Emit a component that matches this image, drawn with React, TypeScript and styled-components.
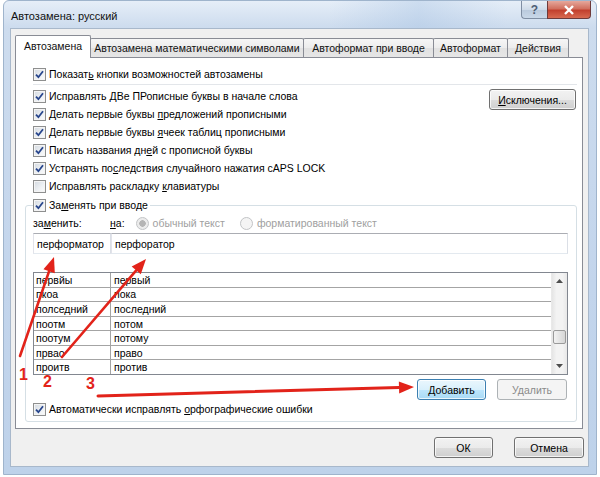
import styled, { createGlobalStyle } from "styled-components";

const GlobalStyle = createGlobalStyle`
  html, body {
    margin: 0;
    padding: 0;
    background: #fff;
  }
  body {
    font-family: "Liberation Sans", Arial, sans-serif;
    font-size: 10.5px;
    color: #000;
  }
  * {
    box-sizing: border-box;
  }
`;

const topOptions = [
  { label: <>Исправлять <u>Д</u>Ве ПРописные буквы в начале слова</>, checked: true },
  { label: <>Делать первые буквы <u>п</u>редложений прописными</>, checked: true },
  { label: <>Делать первые буквы <u>я</u>чеек таблиц прописными</>, checked: true },
  { label: <>Писать названия дн<u>е</u>й с прописной буквы</>, checked: true },
  { label: <>Устранять по<u>с</u>ледствия случайного нажатия cAPS LOCK</>, checked: true },
  { label: <>Исправлять раскладку <u>к</u>лавиатуры</>, checked: false },
];

const entries = [
  ["первйы", "первый"],
  ["пкоа", "пока"],
  ["полседний", "последний"],
  ["поотм", "потом"],
  ["поотум", "потому"],
  ["првао", "право"],
  ["проитв", "против"],
];

const tabs = [
  { title: "Автозамена", width: 76, active: true },
  { title: "Автозамена математическими символами", width: 214 },
  { title: "Автоформат при вводе", width: 131 },
  { title: "Автоформат", width: 75 },
  { title: "Действия", width: 62 },
];

const CheckBox = ({ checked }: { checked: boolean }) => (
  <Box>
    {checked && (
      <svg width="11" height="11" viewBox="0 0 11 11">
        <path d="M2 5.6 L4.4 8.2 L9 2.2" fill="none" stroke="#27458c" strokeWidth="1.8" />
      </svg>
    )}
  </Box>
);

const Arrow = ({ x1, y1, x2, y2, w = 2.6 }: { x1: number; y1: number; x2: number; y2: number; w?: number }) => {
  const dx = x2 - x1;
  const dy = y2 - y1;
  const len = Math.hypot(dx, dy);
  const ux = dx / len;
  const uy = dy / len;
  const bx = x2 - ux * 15;
  const by = y2 - uy * 15;
  const head = `${x2},${y2} ${bx - uy * 6},${by + ux * 6} ${bx + uy * 6},${by - ux * 6}`;
  return (
    <g>
      <line x1={x1} y1={y1} x2={bx} y2={by} stroke="#e2231a" strokeWidth={w} strokeLinecap="round" />
      <polygon points={head} fill="#e2231a" />
    </g>
  );
};

export default function App() {
  return (
    <Page>
      <GlobalStyle />
      <Window>
        <TitleBar>
          <Title>Автозамена: русский</Title>
          <Caption>
            <HelpButton>?</HelpButton>
            <CloseButton>
              <svg width="12" height="10" viewBox="0 0 12 10">
                <path d="M2 1 L10 9 M10 1 L2 9" stroke="#fff" strokeWidth="2.4" />
              </svg>
            </CloseButton>
          </Caption>
        </TitleBar>
        <Client>
          <TabStrip>
            {tabs.map((t) => (
              <Tab key={t.title} $width={t.width} $active={!!t.active}>
                {t.title}
              </Tab>
            ))}
          </TabStrip>
          <Panel>
            <CheckRow>
              <CheckBox checked />
              <span>
                Показат<u>ь</u> кнопки возможностей автозамены
              </span>
            </CheckRow>
            <Separator />
            <OptionsBlock>
              <div>
                {topOptions.map((o, i) => (
                  <CheckRow key={i}>
                    <CheckBox checked={o.checked} />
                    <span>{o.label}</span>
                  </CheckRow>
                ))}
              </div>
              <Button $width={87}>
                <u>И</u>сключения...
              </Button>
            </OptionsBlock>
            <Group>
              <Legend>
                <CheckBox checked />
                <span>
                  За<u>м</u>енять при вводе
                </span>
              </Legend>
              <LabelsRow>
                <FieldLabel>
                  за<u>м</u>енить:
                </FieldLabel>
                <span>
                  <u>н</u>а:
                </span>
                <RadioOption>
                  <Radio $selected />
                  обычный текст
                </RadioOption>
                <RadioOption>
                  <Radio />
                  форматированный текст
                </RadioOption>
              </LabelsRow>
              <InputsRow>
                <TextField $width={78}>перформатор</TextField>
                <TextField>перфоратор</TextField>
              </InputsRow>
              <ListBox>
                <Rows>
                  {entries.map(([from, to]) => (
                    <Row key={from}>
                      <Cell $first>{from}</Cell>
                      <Cell>{to}</Cell>
                    </Row>
                  ))}
                </Rows>
                <ScrollBar>
                  <ScrollArrow>
                    <svg width="7" height="4" viewBox="0 0 7 4">
                      <path d="M0 4 L3.5 0 L7 4 Z" fill="#4d4d4d" />
                    </svg>
                  </ScrollArrow>
                  <Track>
                    <Thumb />
                  </Track>
                  <ScrollArrow>
                    <svg width="7" height="4" viewBox="0 0 7 4">
                      <path d="M0 0 L3.5 4 L7 0 Z" fill="#4d4d4d" />
                    </svg>
                  </ScrollArrow>
                </ScrollBar>
              </ListBox>
              <ButtonsRow>
                <Button $width={69} $default>
                  <u>Д</u>обавить
                </Button>
                <Button $width={70} $disabled>
                  Удалить
                </Button>
              </ButtonsRow>
              <CheckRow>
                <CheckBox checked />
                <span>
                  Автоматически исправлять <u>о</u>рфографические ошибки
                </span>
              </CheckRow>
            </Group>
          </Panel>
          <Footer>
            <Button $width={59}>ОК</Button>
            <Button $width={70}>Отмена</Button>
          </Footer>
        </Client>
      </Window>
      <Annotations width="600" height="477" viewBox="0 0 600 477">
        <Arrow x1={20} y1={356} x2={54} y2={257} />
        <Arrow x1={62} y1={357} x2={146} y2={259} />
        <Arrow x1={98} y1={396} x2={414} y2={387} w={3} />
        <NumberText x="19" y="380">1</NumberText>
        <NumberText x="43" y="387">2</NumberText>
        <NumberText x="86" y="389">3</NumberText>
      </Annotations>
    </Page>
  );
}

const Page = styled.div`
  position: relative;
  width: 600px;
  height: 477px;
  overflow: hidden;
  background: #fff;
`;

const Window = styled.div`
  margin-left: 3px;
  width: 594px;
  height: 475px;
  display: flex;
  flex-direction: column;
  border: 1px solid #9fb4cc;
  border-radius: 6px 6px 0 0;
  background: linear-gradient(180deg, #e6eef8 0px, #cddcee 26px, #c3d5ec 60%, #bed2ea 100%);
`;

const TitleBar = styled.div`
  height: 27px;
  display: flex;
  align-items: flex-start;
  padding-left: 7px;
  background: linear-gradient(90deg, rgba(255, 255, 255, 0) 0%, rgba(255, 255, 255, 0) 55%, rgba(160, 190, 225, 0.35) 70%, rgba(255, 255, 255, 0) 85%);
`;

const Title = styled.div`
  margin-top: 9px;
  font-size: 11px;
  color: #111;
`;

const Caption = styled.div`
  margin-left: auto;
  margin-right: 5px;
  display: flex;
`;

const HelpButton = styled.div`
  width: 26px;
  height: 18px;
  display: flex;
  align-items: center;
  justify-content: center;
  border: 1px solid #7f8ea3;
  border-right: none;
  border-top: none;
  border-radius: 0 0 0 4px;
  background: linear-gradient(180deg, #e9eff6 0%, #cfdbe9 50%, #b9c9dc 51%, #c9d8e9 100%);
  font-size: 12px;
  font-weight: bold;
  color: #4f5f75;
`;

const CloseButton = styled.div`
  width: 44px;
  height: 18px;
  display: flex;
  align-items: center;
  justify-content: center;
  border: 1px solid #6e3a3a;
  border-top: none;
  border-radius: 0 0 4px 0;
  background: linear-gradient(180deg, #e6a89c 0%, #d1705f 45%, #c2402e 55%, #d86a50 100%);
`;

const Client = styled.div`
  flex: 1;
  margin: 0 7px 7px 6px;
  border: 1px solid #a8b8cb;
  background: #f0f0f0;
  padding: 6px 5px 0 4px;
  display: flex;
  flex-direction: column;
`;

const TabStrip = styled.div`
  height: 22px;
  display: flex;
  align-items: flex-end;
  position: relative;
  z-index: 1;
`;

const Tab = styled.div<{ $width: number; $active: boolean }>`
  width: ${({ $width }) => $width}px;
  height: ${({ $active }) => ($active ? 23 : 19)}px;
  margin-bottom: ${({ $active }) => ($active ? -1 : 0)}px;
  margin-left: -1px;
  &:first-child {
    margin-left: 0;
  }
  display: flex;
  align-items: center;
  justify-content: center;
  padding-bottom: ${({ $active }) => ($active ? 2 : 0)}px;
  border: 1px solid #898c95;
  border-bottom: none;
  border-radius: 2px 2px 0 0;
  background: ${({ $active }) =>
    $active ? "#fff" : "linear-gradient(180deg, #f6f6f6 0%, #ececec 50%, #e1e1e1 51%, #e6e6e6 100%)"};
  position: relative;
  z-index: ${({ $active }) => ($active ? 2 : 1)};
  white-space: nowrap;
  color: #111;
`;

const Panel = styled.div`
  flex: 1;
  border: 1px solid #898c95;
  background: #fff;
  padding: 7px 5px 0 17px;
  display: flex;
  flex-direction: column;
`;

const CheckRow = styled.div`
  height: 18px;
  display: flex;
  align-items: center;
  gap: 3px;
  white-space: nowrap;
`;

const Box = styled.span`
  width: 13px;
  height: 13px;
  flex: none;
  display: flex;
  align-items: center;
  justify-content: center;
  border: 1px solid #8e8f8f;
  background: linear-gradient(135deg, #d3d9e0 0%, #eef1f4 60%, #fbfbfb 100%);
  box-shadow: inset 0 0 0 1px #f4f4f4;
`;

const Separator = styled.div`
  height: 1px;
  margin: 1px 0 2px;
  background: #e3e6ea;
`;

const OptionsBlock = styled.div`
  display: flex;
  align-items: flex-start;
  justify-content: space-between;

  & > button {
    margin-top: 2px;
    margin-right: 1px;
  }
`;

const Button = styled.button<{ $width: number; $default?: boolean; $disabled?: boolean }>`
  width: ${({ $width }) => $width}px;
  height: 21px;
  padding: 0;
  font-family: inherit;
  font-size: 10.5px;
  color: ${({ $disabled }) => ($disabled ? "#8a8a8a" : "#000")};
  border: 1px solid ${({ $default, $disabled }) => ($default ? "#3c7fb1" : $disabled ? "#adb2b5" : "#707070")};
  border-radius: 3px;
  background: ${({ $default, $disabled }) =>
    $default
      ? "linear-gradient(180deg, #eaf6fd 0%, #d9f0fc 50%, #bee6fd 51%, #a7d9f5 100%)"
      : $disabled
      ? "#f4f4f4"
      : "linear-gradient(180deg, #f2f2f2 0%, #ebebeb 50%, #dddddd 51%, #cfcfcf 100%)"};
  box-shadow: inset 0 0 0 1px ${({ $disabled }) => ($disabled ? "#f4f4f4" : "rgba(255,255,255,0.75)")};
`;

const Group = styled.fieldset`
  margin: 1px 0 0 -8px;
  padding: 0 8px 3px 7px;
  min-width: 0;
  border: 1px solid #d5dfe5;
  border-radius: 3px;
`;

const Legend = styled.legend`
  padding: 0 2px 0 0;
  height: 18px;
  display: flex;
  align-items: center;
  gap: 3px;
  white-space: nowrap;
`;

const LabelsRow = styled.div`
  height: 18px;
  display: flex;
  align-items: center;
  white-space: nowrap;
`;

const FieldLabel = styled.span`
  width: 77px;
`;

const RadioOption = styled.span`
  display: flex;
  align-items: center;
  gap: 4px;
  margin-left: 11px;
  color: #a0a0a0;
  &:last-child {
    margin-left: 15px;
  }
`;

const Radio = styled.span<{ $selected?: boolean }>`
  width: 13px;
  height: 13px;
  border-radius: 50%;
  border: 1px solid #c2c4c6;
  background: ${({ $selected }) =>
    $selected ? "radial-gradient(circle, #b5b5b5 0 3px, #ececec 3.5px)" : "#f4f4f4"};
`;

const InputsRow = styled.div`
  margin-top: 1px;
  display: flex;
`;

const TextField = styled.div<{ $width?: number }>`
  ${({ $width }) => ($width ? `width: ${$width}px;` : "flex: 1;")}
  height: 21px;
  display: flex;
  align-items: center;
  padding-left: 3px;
  border: 1px solid #abadb3;
  border-color: #abadb3 #dbdfe6 #e3e9ef #e2e3ea;
  background: #fff;
  white-space: nowrap;
`;

const ListBox = styled.div`
  margin-top: 18px;
  height: 103px;
  display: flex;
  border: 1px solid #828790;
`;

const Rows = styled.div`
  flex: 1;
  display: flex;
  flex-direction: column;
`;

const Row = styled.div`
  flex: 1;
  display: grid;
  grid-template-columns: 77px 1fr;
  border-bottom: 1px solid #a4a4a4;
  &:last-child {
    border-bottom: none;
  }
`;

const Cell = styled.div<{ $first?: boolean }>`
  display: flex;
  align-items: center;
  padding-left: ${({ $first }) => ($first ? 2 : 3)}px;
  border-right: ${({ $first }) => ($first ? "1px solid #a4a4a4" : "none")};
  white-space: nowrap;
  overflow: hidden;
`;

const ScrollBar = styled.div`
  width: 16px;
  display: flex;
  flex-direction: column;
  border-left: 1px solid #e9e9e9;
  background: linear-gradient(90deg, #e5e5e5 0%, #f3f3f3 30%, #f3f3f3 70%, #e8e8e8 100%);
`;

const ScrollArrow = styled.div`
  height: 16px;
  display: flex;
  align-items: center;
  justify-content: center;
`;

const Track = styled.div`
  flex: 1;
  padding-top: 41px;
`;

const Thumb = styled.div`
  height: 14px;
  margin: 0 1px;
  border: 1px solid #9a9a9a;
  border-radius: 2px;
  background: linear-gradient(90deg, #f2f2f2 0%, #e4e4e4 50%, #d6d6d6 100%);
`;

const ButtonsRow = styled.div`
  margin-top: 4px;
  display: flex;
  justify-content: flex-end;
  gap: 11px;
  padding-right: 1px;
`;

const Footer = styled.div`
  height: 37px;
  display: flex;
  justify-content: flex-end;
  gap: 21px;
  padding-top: 8px;
  margin-right: -1px;
`;

const Annotations = styled.svg`
  position: absolute;
  left: 0;
  top: 0;
  pointer-events: none;
`;

const NumberText = styled.text`
  font-family: "Liberation Sans", Arial, sans-serif;
  font-size: 16px;
  font-weight: bold;
  fill: #e2231a;
`;
